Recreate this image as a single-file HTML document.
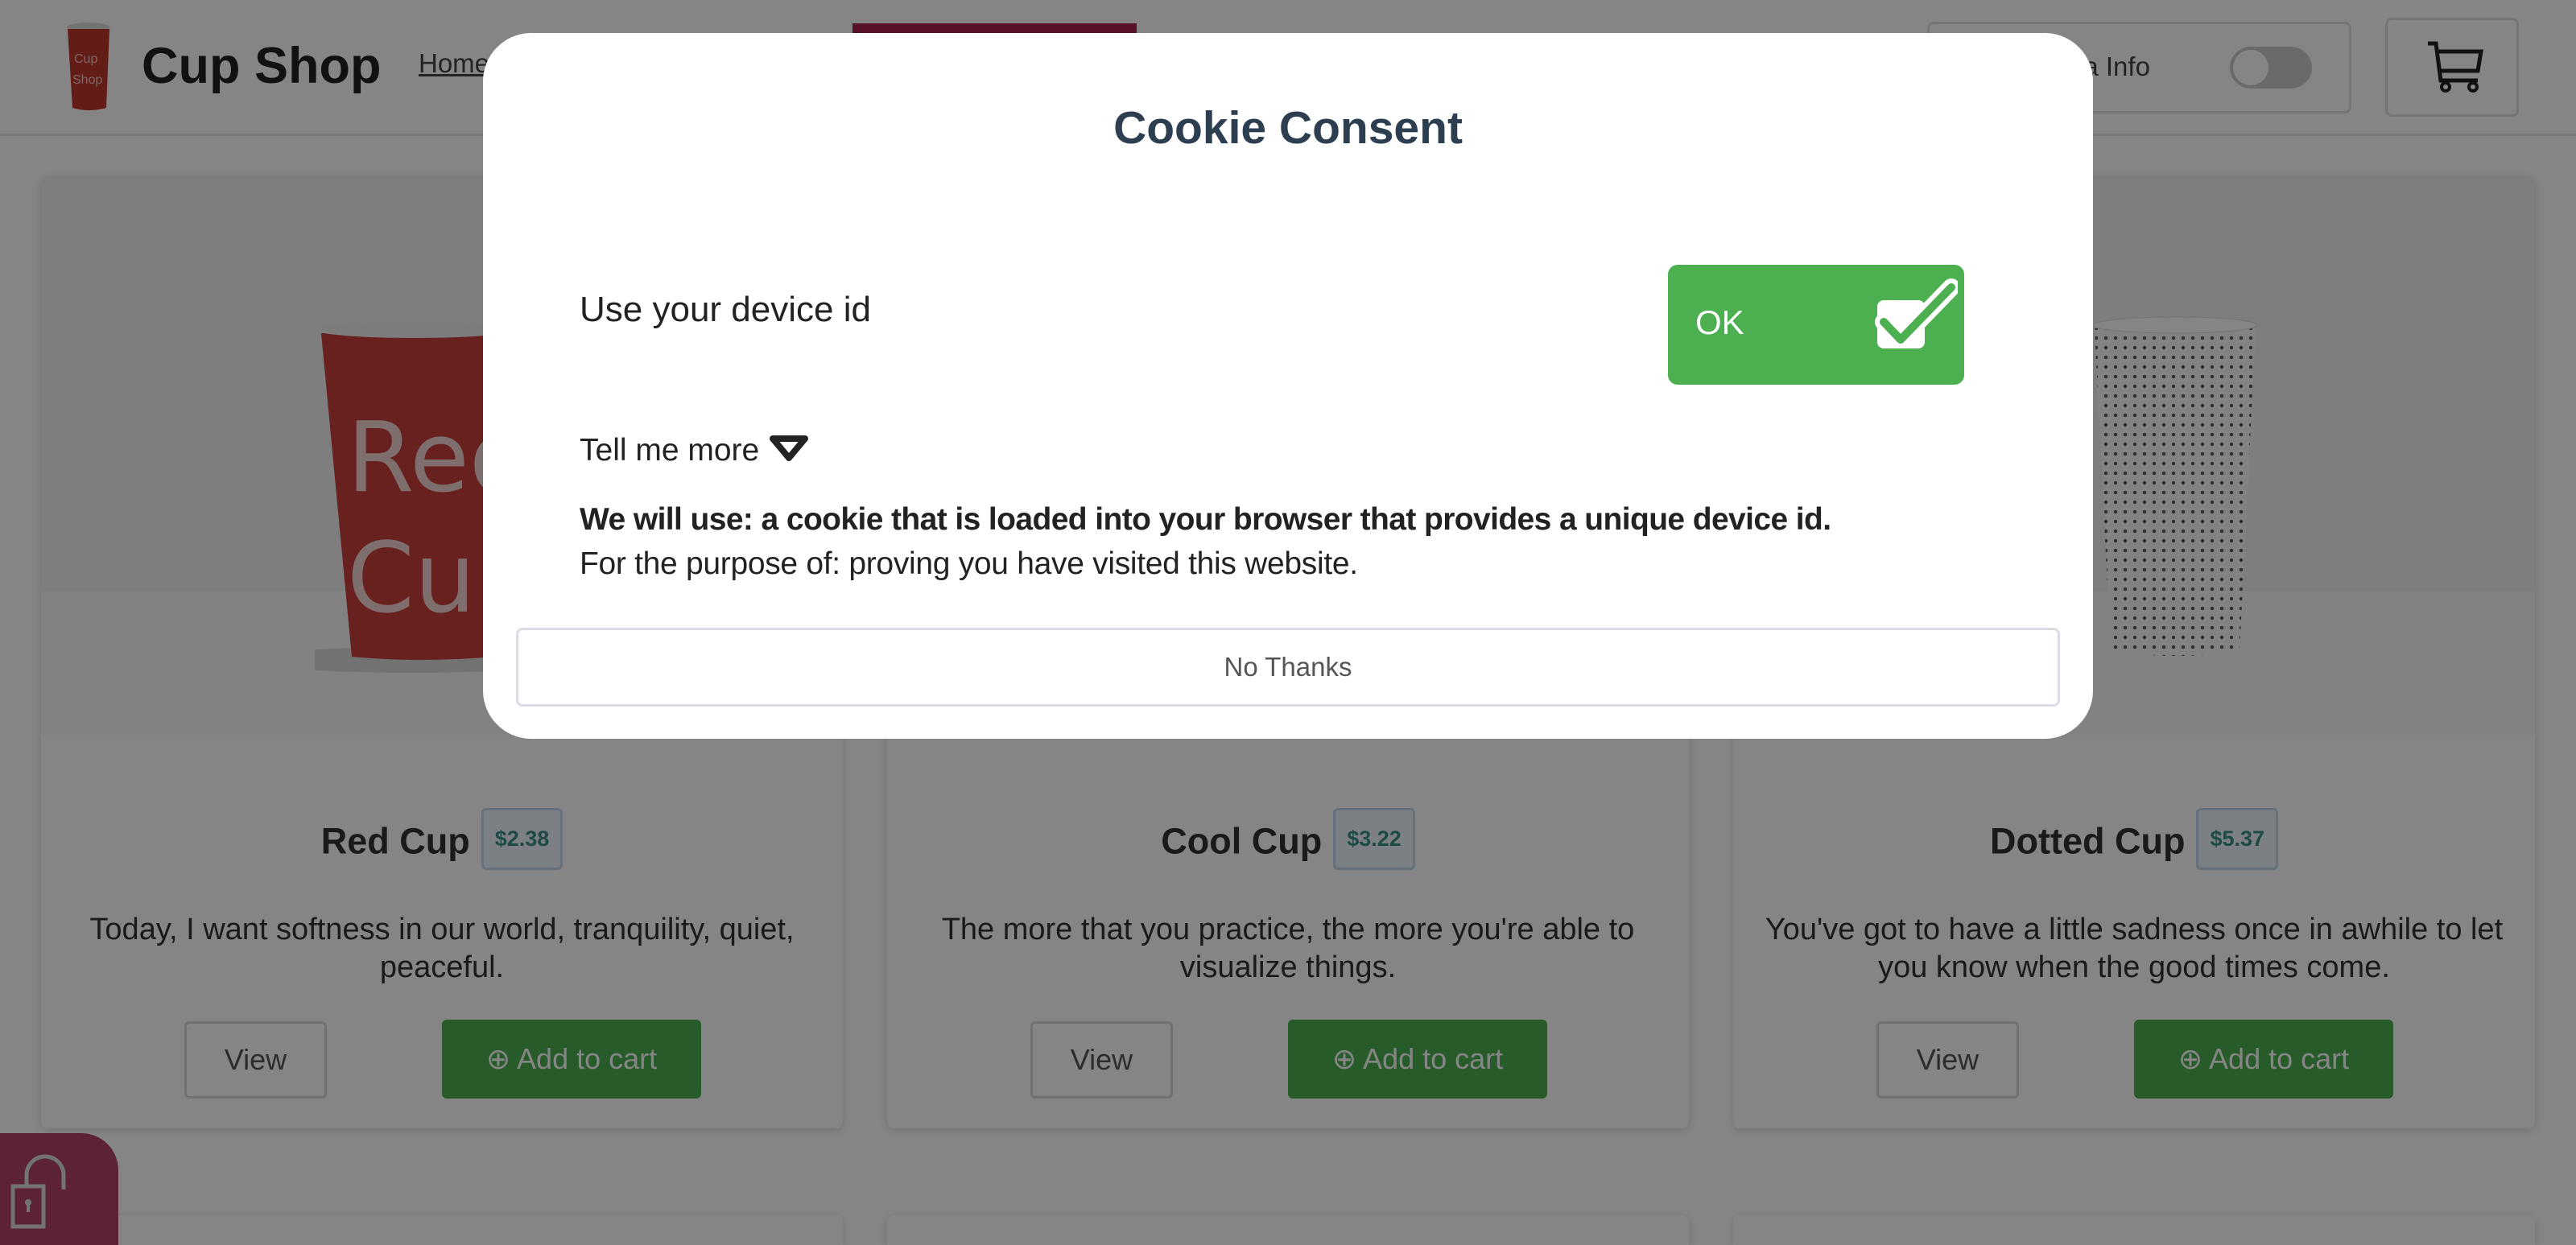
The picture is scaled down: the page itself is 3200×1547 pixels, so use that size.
<!DOCTYPE html>
<html style="width:3200px;height:1547px;overflow:hidden"><head><meta charset="utf-8"><style>
*{box-sizing:border-box;margin:0;padding:0}
body{width:3200px;height:1547px;overflow:hidden;background:#fff;font-family:"Liberation Sans",sans-serif;position:relative}
.abs{position:absolute}
.hdr{left:0;top:0;width:3200px;height:169px;border-bottom:3px solid #e8e8e8;background:#fff}
.card{background:#fff;border-radius:8px;box-shadow:0 2px 10px rgba(0,0,0,.15);width:996px}
.img{background:#f1f1f1;height:698px;border-radius:8px 8px 0 0;overflow:hidden;position:relative}
.img .floor{position:absolute;left:0;right:0;top:515px;bottom:0;background:#f9f9f9}
.wrap{position:absolute;top:0;width:996px;height:1400px}
.title{position:absolute;top:1010px;width:996px;text-align:center;font-size:45px;font-weight:bold;color:#333}
.badge{display:inline-block;vertical-align:middle;border:3px solid #c6d8ec;background:#eef4fb;border-radius:6px;color:#3a8f8a;font-size:27px;padding:20px 14px;margin-left:14px;position:relative;top:-6px}
.desc{position:absolute;top:1132px;left:30px;width:936px;text-align:center;font-size:38px;line-height:47px;color:#333}
.view{position:absolute;top:1269px;width:177px;height:96px;border:3px solid #d8d8d8;border-radius:6px;font-size:36px;color:#555;text-align:center;line-height:90px}
.add{position:absolute;top:1267px;width:322px;height:98px;background:#4caf50;border-radius:6px;font-size:36px;color:#fff;text-align:center;line-height:98px}
.ov{left:0;top:0;width:3200px;height:1547px;background:rgba(0,0,0,.48)}
.modal{left:600px;top:41px;width:2000px;height:877px;background:#fff;border-radius:60px}
.m{font-family:"Liberation Sans","DejaVu Sans",sans-serif;color:#222}
</style></head><body>
<div class="abs hdr"></div>
<svg class="abs" style="left:70px;top:26px" width="86" height="116" viewBox="0 0 86 116">
<ellipse cx="40" cy="8" rx="27" ry="6" fill="#ddd"/>
<path d="M14 10 L66 10 L62 108 Q40 114 20 108 Z" fill="#c0392b"/>
<text x="22" y="52" font-size="16" fill="#f3c0c0" font-family="Liberation Sans">Cup</text>
<text x="20" y="78" font-size="16" fill="#f3c0c0" font-family="Liberation Sans">Shop</text>
</svg>
<div class="abs" style="left:176px;top:46px;font-size:63px;font-weight:bold;color:#222">Cup Shop</div>
<div class="abs" style="left:520px;top:60px;font-size:33px;color:#444;text-decoration:underline">Home</div>
<div class="abs" style="left:1059px;top:29px;width:353px;height:12px;background:#a8244f"></div>
<div class="abs" style="left:2394px;top:27px;width:527px;height:114px;border:3px solid #e0e0e0;border-radius:8px"></div>
<div class="abs" style="left:2537px;top:64px;font-size:33px;color:#444">Data Info</div>
<div class="abs" style="left:2770px;top:58px;width:102px;height:52px;border-radius:26px;background:#ccc"><div style="position:absolute;left:4px;top:4px;width:44px;height:44px;border-radius:22px;background:#fff"></div></div>
<div class="abs" style="left:2963px;top:22px;width:166px;height:123px;border:3px solid #e0e0e0;border-radius:8px"></div>
<svg class="abs" style="left:3010px;top:48px" width="80" height="70" viewBox="0 0 80 70"><path d="M6 6 H16 L22 52 H68 M19 16 H72 L68 40 H21" fill="none" stroke="#222" stroke-width="5"/><circle cx="28" cy="60" r="5" fill="none" stroke="#222" stroke-width="4"/><circle cx="62" cy="60" r="5" fill="none" stroke="#222" stroke-width="4"/></svg>

<div class="abs card" style="left:51px;top:220px;height:1182px">
 <div class="img"><div class="floor"></div>
  <svg style="position:absolute;left:340px;top:170px" width="340" height="450"><ellipse cx="120" cy="430" rx="200" ry="16" fill="#bbb" opacity=".5"/><path d="M8 24 L240 24 L222 426 Q130 434 46 426 Z" fill="#c9403c"/><ellipse cx="124" cy="20" rx="122" ry="10" fill="#eee"/><text x="40" y="220" font-size="120" fill="#f3d3d3" font-family="DejaVu Sans">Red</text><text x="40" y="370" font-size="120" fill="#f3d3d3" font-family="DejaVu Sans">Cup</text></svg>
 </div>
</div>
<div class="abs card" style="left:1102px;top:220px;height:1182px"><div class="img"><div class="floor"></div></div></div>
<div class="abs card" style="left:2153px;top:220px;height:1182px"><div class="img"><div class="floor"></div>
 <svg style="position:absolute;left:445px;top:170px" width="210" height="440"><defs><pattern id="d" width="12" height="12" patternUnits="userSpaceOnUse"><circle cx="6" cy="6" r="2.2" fill="#555"/></pattern></defs><path d="M4 18 L204 18 L184 420 Q104 430 24 420 Z" fill="#fafafa"/><path d="M4 18 L204 18 L184 420 Q104 430 24 420 Z" fill="url(#d)"/><ellipse cx="104" cy="14" rx="102" ry="10" fill="#fff" stroke="#ddd"/></svg>
</div></div>

<div class="wrap" style="left:51px">
 <div class="title">Red Cup<span class="badge">$2.38</span></div>
 <div class="desc">Today, I want softness in our world, tranquility, quiet, peaceful.</div>
 <div class="view" style="left:178px">View</div><div class="add" style="left:498px">⊕ Add to cart</div>
</div>
<div class="wrap" style="left:1102px">
 <div class="title">Cool Cup<span class="badge">$3.22</span></div>
 <div class="desc">The more that you practice, the more you're able to visualize things.</div>
 <div class="view" style="left:178px">View</div><div class="add" style="left:498px">⊕ Add to cart</div>
</div>
<div class="wrap" style="left:2153px">
 <div class="title">Dotted Cup<span class="badge">$5.37</span></div>
 <div class="desc">You've got to have a little sadness once in awhile to let you know when the good times come.</div>
 <div class="view" style="left:178px">View</div><div class="add" style="left:498px">⊕ Add to cart</div>
</div>
<div class="abs card" style="left:51px;top:1510px;height:37px;border-radius:8px 8px 0 0"></div>
<div class="abs card" style="left:1102px;top:1510px;height:37px;border-radius:8px 8px 0 0"></div>
<div class="abs card" style="left:2153px;top:1510px;height:37px;border-radius:8px 8px 0 0"></div>
<div class="abs" style="left:0;top:1408px;width:147px;height:139px;background:#b0426c;border-radius:0 46px 0 0"></div>
<svg class="abs" style="left:0;top:0" width="147" height="1547" viewBox="0 0 147 1547"><path d="M33 1472 V1460 A23 23 0 0 1 79 1460 V1478" fill="none" stroke="#ddd" stroke-width="5"/><rect x="16" y="1474" width="38" height="50" fill="none" stroke="#ddd" stroke-width="5"/><circle cx="35" cy="1494" r="4" fill="#ddd"/><rect x="33" y="1494" width="4" height="12" fill="#ddd"/></svg>

<div class="abs ov"></div>

<div class="abs modal m">
 <div style="position:absolute;top:85px;width:2000px;text-align:center;font-size:57px;font-weight:bold;color:#2c3e50">Cookie Consent</div>
 <div style="position:absolute;left:120px;top:319px;font-size:44px">Use your device id</div>
 <div style="position:absolute;left:1472px;top:288px;width:368px;height:149px;background:#4caf50;border-radius:12px">
  <div style="position:absolute;left:34px;top:48px;font-size:42px;color:#fff">OK</div>
  <svg style="position:absolute;left:250px;top:11px" width="110" height="110" viewBox="2322 340 110 110"><rect x="2332" y="373" width="59" height="60" rx="8" fill="#fff"/><path d="M2340 400 L2361 422 L2424 357" fill="none" stroke="#fff" stroke-width="22" stroke-linecap="round" stroke-linejoin="round"/><path d="M2340 400 L2361 422 L2424 357" fill="none" stroke="#4caf50" stroke-width="10" stroke-linecap="round" stroke-linejoin="round"/></svg>
 </div>
 <div style="position:absolute;left:120px;top:497px;font-size:39px">Tell me more <svg width="52" height="34" viewBox="0 0 52 34" style="vertical-align:-2px"><path d="M6 5 H46 L26 29 Z" fill="none" stroke="#222" stroke-width="8" stroke-linejoin="round"/></svg></div>
 <div style="position:absolute;left:120px;top:583px;font-size:39px;font-weight:bold;letter-spacing:-0.6px">We will use: a cookie that is loaded into your browser that provides a unique device id.</div>
 <div style="position:absolute;left:120px;top:638px;font-size:39px;letter-spacing:-0.3px">For the purpose of: proving you have visited this website.</div>
 <div style="position:absolute;left:41px;top:739px;width:1918px;height:98px;border:3px solid #dcdce6;border-radius:8px;text-align:center;line-height:92px;font-size:33px;color:#555">No Thanks</div>
</div>
</body></html>
